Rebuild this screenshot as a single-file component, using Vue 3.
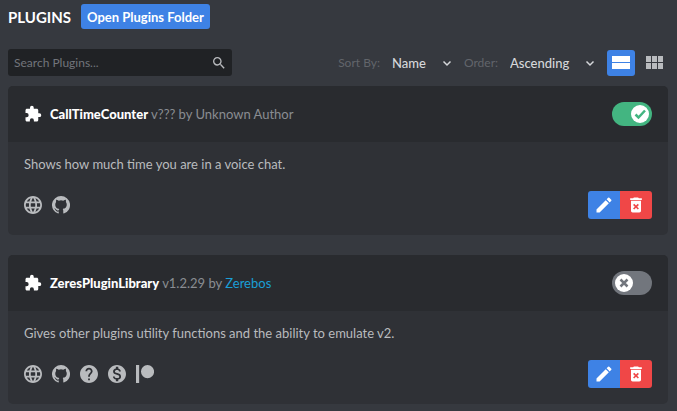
<script setup>
import { ref } from 'vue'

const search = ref('')
const sortBy = ref('name')
const order = ref('asc')
const view = ref('list')

const icons = {
  web: 'M12 2C6.48 2 2 6.48 2 12s4.48 10 10 10 10-4.48 10-10S17.52 2 12 2zm6.93 6h-2.95c-.32-1.25-.78-2.45-1.38-3.56 1.84.63 3.37 1.91 4.33 3.56zM12 4.04c.83 1.2 1.48 2.53 1.91 3.96h-3.82c.43-1.43 1.08-2.76 1.91-3.96zM4.26 14C4.1 13.36 4 12.69 4 12s.1-1.36.26-2h3.38c-.08.66-.14 1.32-.14 2s.06 1.34.14 2H4.26zm.82 2h2.95c.32 1.25.78 2.45 1.38 3.56-1.84-.63-3.37-1.9-4.33-3.56zm2.95-8H5.08c.96-1.66 2.49-2.93 4.33-3.56C8.81 5.55 8.35 6.75 8.03 8zM12 19.96c-.83-1.2-1.48-2.53-1.91-3.96h3.82c-.43 1.43-1.08 2.76-1.91 3.96zM14.34 14H9.66c-.09-.66-.16-1.32-.16-2s.07-1.35.16-2h4.68c.09.65.16 1.32.16 2s-.07 1.34-.16 2zm.25 5.56c.6-1.11 1.06-2.31 1.38-3.56h2.95c-.96 1.65-2.49 2.93-4.33 3.56zM16.36 14c.08-.66.14-1.32.14-2s-.06-1.34-.14-2h3.38c.16.64.26 1.31.26 2s-.1 1.36-.26 2h-3.38z',
  github: 'M12 2a10 10 0 0 0-3.16 19.49c.5.09.68-.22.68-.48v-1.7c-2.78.6-3.37-1.34-3.37-1.34-.45-1.16-1.11-1.47-1.11-1.47-.91-.62.07-.6.07-.6 1 .07 1.53 1.03 1.53 1.03.89 1.52 2.34 1.08 2.91.83.09-.65.35-1.09.63-1.34-2.22-.25-4.55-1.11-4.55-4.94 0-1.1.39-1.99 1.03-2.69-.1-.25-.45-1.27.1-2.65 0 0 .84-.27 2.75 1.03a9.58 9.58 0 0 1 5 0c1.91-1.3 2.75-1.03 2.75-1.03.55 1.38.2 2.4.1 2.65.64.7 1.03 1.59 1.03 2.69 0 3.84-2.34 4.69-4.57 4.94.36.31.68.92.68 1.85v2.74c0 .27.18.58.69.48A10 10 0 0 0 12 2z',
  help: 'M12 2C6.48 2 2 6.48 2 12s4.48 10 10 10 10-4.48 10-10S17.52 2 12 2zm1 17h-2v-2h2v2zm2.07-7.75l-.9.92C13.45 12.9 13 13.5 13 15h-2v-.5c0-1.1.45-2.1 1.17-2.83l1.24-1.26c.37-.36.59-.86.59-1.41 0-1.1-.9-2-2-2s-2 .9-2 2H8c0-2.21 1.79-4 4-4s4 1.79 4 4c0 .88-.36 1.68-.93 2.25z',
  donate: 'M12 2C6.48 2 2 6.48 2 12s4.48 10 10 10 10-4.48 10-10S17.52 2 12 2zm1.41 16.09V20h-2.67v-1.93c-1.71-.36-3.16-1.46-3.27-3.4h1.96c.1 1.05.82 1.87 2.65 1.87 1.96 0 2.4-.98 2.4-1.59 0-.83-.44-1.61-2.67-2.14-2.48-.6-4.18-1.62-4.18-3.67 0-1.72 1.39-2.84 3.11-3.21V4h2.67v1.95c1.86.45 2.79 1.86 2.85 3.39H14.3c-.05-1.11-.64-1.87-2.22-1.87-1.5 0-2.4.68-2.4 1.64 0 .84.65 1.39 2.67 1.91s4.18 1.39 4.18 3.91c-.01 1.83-1.38 2.83-3.12 3.16z',
  patreon: 'M2 2h3.5v20H2zM14.8 2a7.3 7.3 0 1 0 0 14.6 7.3 7.3 0 0 0 0-14.6z',
}

const plugins = ref([
  {
    name: 'CallTimeCounter',
    version: '???',
    author: 'Unknown Author',
    description: 'Shows how much time you are in a voice chat.',
    enabled: true,
    links: [['web', 'Website'], ['github', 'Source']],
  },
  {
    name: 'ZeresPluginLibrary',
    version: '1.2.29',
    author: 'Zerebos',
    authorLink: '#zerebos',
    description: 'Gives other plugins utility functions and the ability to emulate v2.',
    enabled: false,
    links: [['web', 'Website'], ['github', 'Source'], ['help', 'Support'], ['donate', 'Donate'], ['patreon', 'Patreon']],
  },
])
</script>

<template>
  <main class="page">
    <header class="title-row">
      <h1>PLUGINS</h1>
      <button class="folder" type="button">Open Plugins Folder</button>
    </header>

    <div class="controls">
      <div class="search">
        <input v-model="search" type="text" placeholder="Search Plugins..." aria-label="Search plugins" />
        <svg viewBox="0 0 24 24" width="16" height="16" aria-hidden="true">
          <path d="M15.5 14h-.79l-.28-.27A6.47 6.47 0 0 0 16 9.5 6.5 6.5 0 1 0 9.5 16c1.61 0 3.09-.59 4.23-1.57l.27.28v.79l5 4.99L20.49 19l-4.99-5zm-6 0C7.01 14 5 11.99 5 9.5S7.01 5 9.5 5 14 7.01 14 9.5 11.99 14 9.5 14z" />
        </svg>
      </div>

      <div class="filters">
        <label for="sort">Sort By:</label>
        <div class="select sort">
          <select id="sort" v-model="sortBy">
            <option value="name">Name</option>
            <option value="author">Author</option>
          </select>
          <svg viewBox="0 0 10 10" width="10" height="10" aria-hidden="true"><path d="M1.5 3.5L5 7l3.5-3.5" /></svg>
        </div>
        <label for="order">Order:</label>
        <div class="select order">
          <select id="order" v-model="order">
            <option value="asc">Ascending</option>
            <option value="desc">Descending</option>
          </select>
          <svg viewBox="0 0 10 10" width="10" height="10" aria-hidden="true"><path d="M1.5 3.5L5 7l3.5-3.5" /></svg>
        </div>
        <div class="views">
          <button type="button" aria-label="List view" :class="{ active: view === 'list' }" @click="view = 'list'">
            <svg viewBox="0 0 18 14" width="18" height="14" aria-hidden="true"><path d="M0 0h18v6H0zM0 7h18v6H0z" /></svg>
          </button>
          <button type="button" aria-label="Grid view" :class="{ active: view === 'grid' }" @click="view = 'grid'">
            <svg viewBox="0 0 18 14" width="18" height="14" aria-hidden="true"><path d="M1 0h5v6H1zM7 0h5v6H7zM13 0h5v6h-5zM1 7h5v6H1zM7 7h5v6H7zM13 7h5v6h-5z" /></svg>
          </button>
        </div>
      </div>
    </div>

    <div class="list">
      <article v-for="plugin in plugins" :key="plugin.name" class="card">
        <header class="card-head">
          <svg class="puzzle" viewBox="0 0 24 24" width="18" height="18" aria-hidden="true">
            <path d="M20.5 11H19V7c0-1.1-.9-2-2-2h-4V3.5a2.5 2.5 0 0 0-5 0V5H4c-1.1 0-2 .9-2 2v3.8h1.5a2.7 2.7 0 0 1 0 5.4H2V20c0 1.1.9 2 2 2h3.8v-1.5a2.7 2.7 0 0 1 5.4 0V22H17c1.1 0 2-.9 2-2v-4h1.5a2.5 2.5 0 0 0 0-5z" />
          </svg>
          <h2>
            <strong>{{ plugin.name }}</strong> v{{ plugin.version }} by
            <a v-if="plugin.authorLink" :href="plugin.authorLink">{{ plugin.author }}</a>
            <template v-else>{{ plugin.author }}</template>
          </h2>
          <label class="switch">
            <input v-model="plugin.enabled" type="checkbox" :aria-label="'Enable ' + plugin.name" />
            <span class="knob">
              <svg viewBox="0 0 18 18" width="18" height="18" aria-hidden="true">
                <path v-if="plugin.enabled" d="M4.5 9.5L7.5 12.5L14 5.5" />
                <path v-else d="M5.5 5.5L12.5 12.5M12.5 5.5L5.5 12.5" />
              </svg>
            </span>
          </label>
        </header>
        <div class="card-body">
          <p>{{ plugin.description }}</p>
          <footer>
            <nav class="links">
              <a v-for="[icon, label] in plugin.links" :key="icon" :href="'#' + icon" :aria-label="label">
                <svg viewBox="2 2 20 20" width="18" height="18" aria-hidden="true"><path :d="icons[icon]" /></svg>
              </a>
            </nav>
            <div class="actions">
              <button class="edit" type="button" :aria-label="'Edit ' + plugin.name">
                <svg viewBox="0 0 24 24" width="20" height="20" aria-hidden="true"><path d="M3 17.25V21h3.75L17.81 9.94l-3.75-3.75L3 17.25zM20.71 7.04a1 1 0 0 0 0-1.41l-2.34-2.34a1 1 0 0 0-1.41 0l-1.83 1.83 3.75 3.75 1.83-1.83z" /></svg>
              </button>
              <button class="delete" type="button" :aria-label="'Delete ' + plugin.name">
                <svg viewBox="0 0 24 24" width="20" height="20" aria-hidden="true"><path d="M6 19c0 1.1.9 2 2 2h8c1.1 0 2-.9 2-2V7H6v12zm2.46-7.12l1.41-1.41L12 12.59l2.12-2.12 1.41 1.41L13.41 14l2.12 2.12-1.41 1.41L12 15.41l-2.12 2.12-1.41-1.41L10.59 14l-2.13-2.12zM15.5 4l-1-1h-5l-1 1H5v2h14V4z" /></svg>
              </button>
            </div>
          </footer>
        </div>
      </article>
    </div>
  </main>
</template>

<style>
body {
  margin: 0;
  background: #36393f;
}
</style>

<style scoped>
.page {
  padding: 4px 9px 8px 8px;
  color: #b9bbbe;
  font-family: Lato, "Noto Sans", sans-serif;
  font-size: 13px;
  line-height: 20px;
}
h1, h2, p {
  margin: 0;
}
button, input, select {
  font: inherit;
  color: inherit;
  border: 0;
  margin: 0;
  padding: 0;
  background: none;
}
button {
  display: flex;
  align-items: center;
  justify-content: center;
  cursor: pointer;
}
svg {
  display: block;
  flex: none;
  fill: currentColor;
}
.title-row {
  display: flex;
  align-items: center;
  gap: 10px;
}
h1 {
  color: #fff;
  font-size: 15px;
  font-weight: 700;
}
.folder {
  height: 25px;
  padding: 0 6px;
  border-radius: 3px;
  background: #3e82e5;
  color: #fff;
  font-weight: 700;
}
.controls {
  display: flex;
  align-items: center;
  justify-content: space-between;
  margin: 20px 0 10px;
}
.search {
  display: flex;
  align-items: center;
  width: 34%;
  height: 27px;
  padding: 0 5px 0 6px;
  box-sizing: border-box;
  border-radius: 3px;
  background: #202225;
}
.search input {
  flex: 1;
  min-width: 0;
  outline: 0;
  font-size: 12px;
}
.search input::placeholder {
  color: #72757b;
  opacity: 1;
}
.filters {
  display: flex;
  align-items: center;
}
.filters label {
  color: #62656b;
  font-size: 12px;
}
.select {
  display: flex;
  align-items: center;
  margin: 0 12px;
  color: #d5d7da;
}
.select select {
  appearance: none;
  flex: 1;
  min-width: 0;
  font-weight: 500;
}
.select svg {
  fill: none;
  stroke: currentColor;
  stroke-width: 1.5;
}
.sort {
  width: 60px;
}
.order {
  width: 85px;
}
.views {
  display: flex;
  gap: 5px;
}
.views button {
  width: 28px;
  height: 26px;
  border-radius: 3px;
}
.views .active {
  background: #3e82e5;
  color: #fff;
}
.list {
  display: grid;
  gap: 20px;
}
.card {
  overflow: hidden;
  border-radius: 5px;
  background: #2f3136;
}
.card-head {
  display: flex;
  align-items: center;
  gap: 8px;
  height: 56px;
  padding: 0 16px;
  box-sizing: border-box;
  background: #292b2f;
}
.puzzle {
  color: #fff;
}
h2 {
  flex: 1;
  color: #8a8d92;
  font-size: 13px;
  font-weight: 400;
}
h2 strong {
  color: #fff;
  font-weight: 900;
}
h2 a {
  color: #1a9fd6;
  text-decoration: none;
}
.switch {
  display: flex;
  width: 40px;
  height: 24px;
  padding: 3px;
  box-sizing: border-box;
  border-radius: 12px;
  background: #72767d;
  color: #72767d;
  cursor: pointer;
}
.switch:has(input:checked) {
  justify-content: flex-end;
  background: #43b581;
  color: #43b581;
}
.switch input {
  appearance: none;
  width: 0;
  height: 0;
}
.knob {
  border-radius: 50%;
  background: #fff;
}
.knob svg {
  fill: none;
  stroke: currentColor;
  stroke-width: 2.5;
}
.card-body {
  padding: 12px 16px 16px;
}
footer {
  display: flex;
  align-items: center;
  justify-content: space-between;
  margin-top: 17px;
}
.links {
  display: flex;
  gap: 10px;
}
.links a {
  color: #b9bbbe;
}
.actions {
  display: flex;
  overflow: hidden;
  border-radius: 3px;
  color: #fff;
}
.actions button {
  width: 32px;
  height: 28px;
}
.edit {
  background: #3e82e5;
}
.delete {
  background: #f04747;
}
</style>
